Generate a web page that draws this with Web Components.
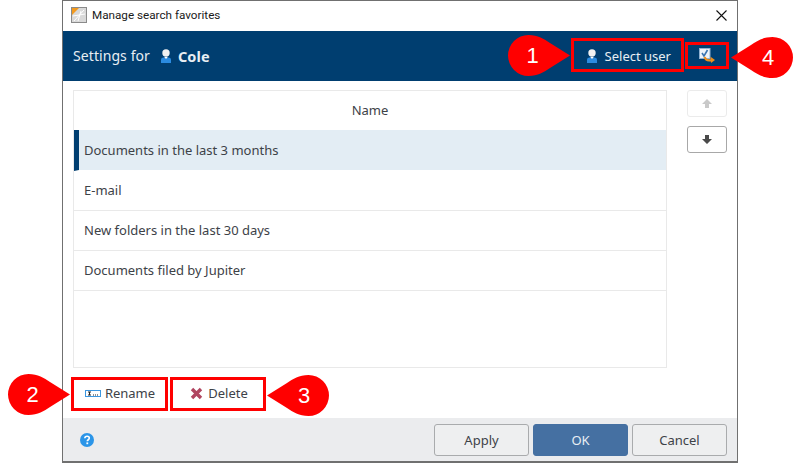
<!DOCTYPE html>
<html>
<head>
<meta charset="utf-8">
<title>Manage search favorites</title>
<style>
  html, body { margin: 0; padding: 0; background: #fff; }
  body { width: 800px; height: 463px; position: relative; overflow: hidden; font-family: "Noto Sans", "Open Sans", sans-serif; font-size: 13px; color: #3d4248; }
</style>
</head>
<body>
<fav-dialog>
  <span slot="title">Manage search favorites</span>
  <settings-bar slot="header" user="Cole"></settings-bar>
  <fav-table slot="list">
    <fav-row selected>Documents in the last 3 months</fav-row>
    <fav-row>E-mail</fav-row>
    <fav-row>New folders in the last 30 days</fav-row>
    <fav-row>Documents filed by Jupiter</fav-row>
  </fav-table>
  <move-button slot="side" dir="up" disabled></move-button>
  <move-button slot="side" dir="down"></move-button>
  <tool-button slot="tools" icon="rename">Rename</tool-button>
  <tool-button slot="tools" icon="delete">Delete</tool-button>
  <dialog-button slot="actions">Apply</dialog-button>
  <dialog-button slot="actions" primary>OK</dialog-button>
  <dialog-button slot="actions">Cancel</dialog-button>
</fav-dialog>

<red-box style="left:571px;top:38px;width:113px;height:34px"></red-box>
<red-box style="left:685px;top:42px;width:44px;height:27px"></red-box>
<red-box style="left:71px;top:377px;width:97px;height:34px"></red-box>
<red-box style="left:170px;top:377px;width:96px;height:34px"></red-box>

<call-out n="1" point="right" style="left:508px;top:35px"></call-out>
<call-out n="2" point="right" style="left:8px;top:374px"></call-out>
<call-out n="3" point="left" style="left:267px;top:375px"></call-out>
<call-out n="4" point="left" style="left:731px;top:37px"></call-out>

<script>
const personIcon = `
  <svg width="10" height="14" viewBox="0 0 10 14">
    <path d="M0 14v-3C0 9.300 1.200 8.500 2.500 8.500h5C8.800 8.500 10 9.300 10 11v3z" fill="#2b8be0"/>
    <circle cx="5" cy="4" r="3.700" fill="#f1f1f1"/>
    <path d="M3.200 8h3.600L5 10z" fill="#fff"/>
  </svg>`

class FavDialog extends HTMLElement {
  constructor() {
    super()
    this.attachShadow({ mode: "open" })
    this.shadowRoot.innerHTML = `
      <style>
        :host {
          display: flex;
          flex-direction: column;
          box-sizing: border-box;
          width: 676px;
          height: 463px;
          margin-left: 62px;
          border: 1px solid #707070;
          border-bottom-width: 2px;
          background: #fff;
        }
        .title {
          display: flex;
          align-items: center;
          gap: 5px;
          box-sizing: border-box;
          height: 30px;
          padding: 0 9px 2px 8px;
          font: 11.700px Roboto, sans-serif;
          color: #1a1a1a;
        }
        .title .name { flex: 1; }
        .title svg { display: block; }
        .body {
          flex: 1;
          display: flex;
          flex-direction: column;
          padding: 9px 10px 7px 10px;
        }
        .main { display: flex; gap: 20px; height: 278px; }
        .main ::slotted(fav-table) { flex: 1; }
        .side { display: flex; flex-direction: column; gap: 9px; }
        .tools { display: flex; gap: 3px; margin-top: 9px; margin-left: -1px; }
        .footer {
          display: flex;
          align-items: center;
          gap: 4px;
          height: 43px;
          padding: 0 10px 0 17px;
          background: #ebecee;
        }
        .footer .help { flex: 1; display: flex; }
      </style>
      <div class="title">
        <svg width="16" height="16" viewBox="0 0 16 16">
          <rect x=".5" y=".5" width="15" height="15" fill="#d9d9d9" stroke="#8a8a8a"/>
          <path d="M1 1h7L1 8z" fill="#f29a1f"/>
          <path d="M3 14L13 3M7 14l3-10M2 9l12-2" stroke="#fff" stroke-width="1" fill="none"/>
        </svg>
        <span class="name"><slot name="title"></slot></span>
        <svg width="13" height="13" viewBox="0 0 13 13">
          <path d="M1.500 1.500l10 10M11.500 1.500l-10 10" stroke="#111" stroke-width="1.100" fill="none"/>
        </svg>
      </div>
      <slot name="header"></slot>
      <div class="body">
        <div class="main">
          <slot name="list"></slot>
          <div class="side"><slot name="side"></slot></div>
        </div>
        <div class="tools"><slot name="tools"></slot></div>
      </div>
      <div class="footer">
        <div class="help">
          <svg width="14" height="14" viewBox="0 0 14 14">
            <circle cx="7" cy="7" r="7" fill="#2b95e8"/>
            <path d="M4.800 5.300C4.900 3.900 5.900 3.200 7.100 3.200c1.300 0 2.200.8 2.200 1.900 0 1.700-2 1.600-2 3.200" stroke="#fff" stroke-width="1.600" fill="none"/>
            <rect x="6.400" y="9.400" width="1.800" height="1.800" fill="#fff"/>
          </svg>
        </div>
        <slot name="actions"></slot>
      </div>
    `
  }
}

class SettingsBar extends HTMLElement {
  constructor() {
    super()
    this.attachShadow({ mode: "open" })
    this.shadowRoot.innerHTML = `
      <style>
        :host {
          display: flex;
          align-items: center;
          box-sizing: border-box;
          height: 50px;
          padding: 0 22px 1px 10px;
          background: #003e70;
          color: #e8eef3;
          font-size: 14px;
        }
        .who { flex: 1; display: flex; align-items: center; letter-spacing: .08px; }
        .who svg { margin: 0 7px 0 11px; }
        b { font-weight: 700; font-size: 14.500px; }
        .select { display: flex; align-items: center; gap: 8px; font-size: 13px; margin-right: 28px; }
        .swap { display: block; }
      </style>
      <div class="who">Settings for ${personIcon}<b>${this.getAttribute("user")}</b></div>
      <div class="select">${personIcon}Select user</div>
      <svg class="swap" width="16" height="16" viewBox="0 0 16 16">
        <rect x=".5" y=".5" width="10.500" height="10" fill="#eef3f8" stroke="#8fb0d0"/>
        <path d="M3 5l2 3 3.500-6" stroke="#3a74b0" stroke-width="1.600" fill="none"/>
        <path d="M5.500 9c1 3 3.500 4 7 3.200" stroke="#ee8f1c" stroke-width="2.200" fill="none"/>
        <path d="M11.500 8.800l4.500 3.200-4 3z" fill="#ee8f1c"/>
      </svg>
    `
  }
}

class FavTable extends HTMLElement {
  constructor() {
    super()
    this.attachShadow({ mode: "open" })
    this.shadowRoot.innerHTML = `
      <style>
        :host {
          display: block;
          box-sizing: border-box;
          border: 1px solid #e9e9e9;
        }
        .head {
          display: flex;
          align-items: center;
          justify-content: center;
          box-sizing: border-box;
          height: 39px;
          padding-bottom: 1px;
        }
      </style>
      <div class="head">Name</div>
      <slot></slot>
    `
  }
}

class FavRow extends HTMLElement {
  constructor() {
    super()
    this.attachShadow({ mode: "open" })
    this.shadowRoot.innerHTML = `
      <style>
        :host {
          display: flex;
          align-items: center;
          box-sizing: border-box;
          height: 40px;
          padding: 0 0 1px 10px;
          border-bottom: 1px solid #e9e9e9;
        }
        :host([selected]) {
          height: 41px;
          padding: 0 0 0 5px;
          background: #e3edf4;
          border-left: 5px solid #003e70;
          border-bottom-color: #fff;
        }
      </style>
      <slot></slot>
    `
  }
}

class MoveButton extends HTMLElement {
  constructor() {
    super()
    this.attachShadow({ mode: "open" })
    const up = this.getAttribute("dir") === "up"
    this.shadowRoot.innerHTML = `
      <style>
        :host {
          display: flex;
          align-items: center;
          justify-content: center;
          box-sizing: border-box;
          width: 40px;
          height: 27px;
          border: 1px solid #a8a8a8;
          border-radius: 3px;
          color: #4a4a4a;
        }
        :host([disabled]) { border-color: #ebebeb; color: #c9c9c9; }
      </style>
      <svg width="10" height="9" viewBox="0 0 10 9" style="transform:rotate(${up ? 0 : 180}deg)">
        <path d="M5 0l5 5H7v4H3V5H0z" fill="currentColor"/>
      </svg>
    `
  }
}

class ToolButton extends HTMLElement {
  constructor() {
    super()
    this.attachShadow({ mode: "open" })
    const icons = {
      rename: `<svg width="16" height="7" viewBox="0 0 16 7">
        <rect x=".5" y=".5" width="15" height="6" fill="#fff" stroke="#3c97e0"/>
        <path d="M3 2h3M3 5h3M4.500 2v3" stroke="#222" fill="none"/>
        <path d="M8 5h1M10 5h1M12 5h1" stroke="#222" fill="none"/>
      </svg>`,
      delete: `<svg width="13" height="13" viewBox="0 0 13 13">
        <path d="M2 2l9 9M11 2l-9 9" stroke="#b04560" stroke-width="3.400" fill="none"/>
      </svg>`,
    }
    this.shadowRoot.innerHTML = `
      <style>
        :host {
          display: flex;
          align-items: center;
          justify-content: center;
          gap: 5px;
          width: 96px;
          height: 32px;
          box-sizing: border-box;
        }
        :host([icon="rename"]) { gap: 4px; }
      </style>
      ${icons[this.getAttribute("icon")]}<slot></slot>
    `
  }
}

class DialogButton extends HTMLElement {
  constructor() {
    super()
    this.attachShadow({ mode: "open" })
    this.shadowRoot.innerHTML = `
      <style>
        :host {
          display: flex;
          align-items: center;
          justify-content: center;
          box-sizing: border-box;
          width: 95px;
          height: 32px;
          border: 1px solid #a9abad;
          border-radius: 3px;
          background: #eeeff0;
        }
        :host([primary]) { background: #4570a2; border-color: #4570a2; color: #e9eef4; }
      </style>
      <slot></slot>
    `
  }
}

class RedBox extends HTMLElement {
  constructor() {
    super()
    this.attachShadow({ mode: "open" })
    this.shadowRoot.innerHTML = `
      <style>
        :host {
          position: absolute;
          box-sizing: border-box;
          border: 3px solid #f00;
        }
      </style>
    `
  }
}

class CallOut extends HTMLElement {
  constructor() {
    super()
    this.attachShadow({ mode: "open" })
    const right = this.getAttribute("point") === "right"
    this.shadowRoot.innerHTML = `
      <style>
        :host {
          position: absolute;
          display: block;
          width: 62px;
          height: 41px;
        }
        svg { position: absolute; left: 0; top: 0; }
        span {
          position: absolute;
          top: 0;
          ${right ? "left: 0; width: 49px" : "right: 0; width: 50px"};
          text-align: center;
          font: 22px/42px "Liberation Sans", sans-serif;
          color: #fff;
        }
      </style>
      <svg width="62" height="41" viewBox="0 0 62 41">
        <path fill="#f00" d="${right
          ? "M20.500 0C30 0 36 4 42 8L62 20.500 42 33C36 37 30 41 20.500 41A20.500 20.500 0 0 1 20.500 0z"
          : "M41.500 0C32 0 26 4 20 8L0 20.500 20 33C26 37 32 41 41.500 41A20.500 20.500 0 0 0 41.500 0z"}"/>
      </svg>
      <span>${this.getAttribute("n")}</span>
    `
  }
}

customElements.define("fav-dialog", FavDialog)
customElements.define("settings-bar", SettingsBar)
customElements.define("fav-table", FavTable)
customElements.define("fav-row", FavRow)
customElements.define("move-button", MoveButton)
customElements.define("tool-button", ToolButton)
customElements.define("dialog-button", DialogButton)
customElements.define("red-box", RedBox)
customElements.define("call-out", CallOut)
</script>
</body>
</html>
